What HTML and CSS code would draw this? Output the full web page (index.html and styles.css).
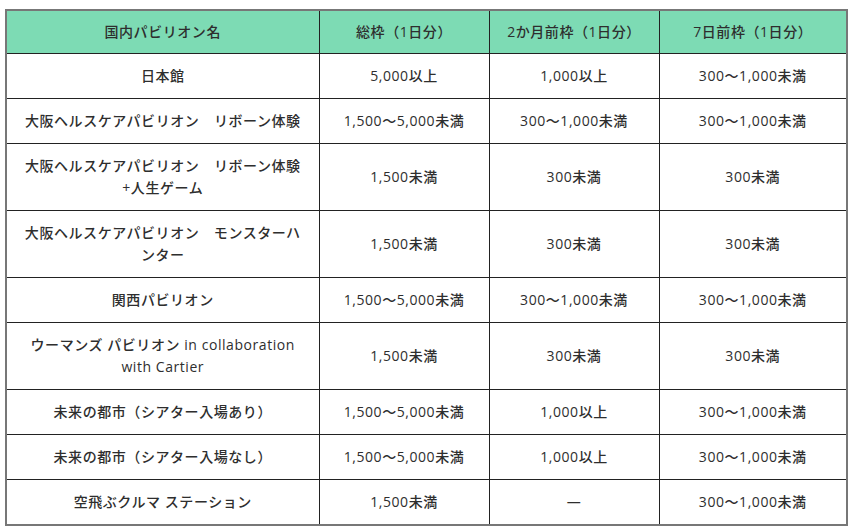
FILE: index.html
```html
<!DOCTYPE html>
<html lang="ja">
<head>
<meta charset="utf-8">
<link rel="stylesheet" href="styles.css">
</head>
<body>
<table class="tbl">
  <thead>
    <tr>
      <th class="c1">国内パビリオン名</th>
      <th class="c2">総枠（1日分）</th>
      <th class="c3">2か月前枠（1日分）</th>
      <th class="c4">7日前枠（1日分）</th>
    </tr>
  </thead>
  <tbody>
    <tr><td>日本館</td><td>5,000以上</td><td>1,000以上</td><td>300～1,000未満</td></tr>
    <tr><td>大阪ヘルスケアパビリオン　リボーン体験</td><td>1,500～5,000未満</td><td>300～1,000未満</td><td>300～1,000未満</td></tr>
    <tr><td>大阪ヘルスケアパビリオン　リボーン体験<br>+人生ゲーム</td><td>1,500未満</td><td>300未満</td><td>300未満</td></tr>
    <tr><td>大阪ヘルスケアパビリオン　モンスターハンター</td><td>1,500未満</td><td>300未満</td><td>300未満</td></tr>
    <tr><td>関西パビリオン</td><td>1,500～5,000未満</td><td>300～1,000未満</td><td>300～1,000未満</td></tr>
    <tr><td>ウーマンズ パビリオン in collaboration with Cartier</td><td>1,500未満</td><td>300未満</td><td>300未満</td></tr>
    <tr><td>未来の都市（シアター入場あり）</td><td>1,500～5,000未満</td><td>1,000以上</td><td>300～1,000未満</td></tr>
    <tr><td>未来の都市（シアター入場なし）</td><td>1,500～5,000未満</td><td>1,000以上</td><td>300～1,000未満</td></tr>
    <tr><td>空飛ぶクルマ ステーション</td><td>1,500未満</td><td>―</td><td>300～1,000未満</td></tr>
  </tbody>
</table>
</body>
</html>
```
FILE: styles.css
```css
html, body {
  margin: 0;
  padding: 0;
  background: #ffffff;
}
body {
  padding: 9px 0 0 5px;
  font-family: "Open Sans", "Noto Sans CJK JP", sans-serif;
  color: #2e2e2e;
  font-size: 14px;
}
.tbl {
  border-collapse: collapse;
  table-layout: fixed;
  width: 841px;
  border: 2px solid #777777;
}
.tbl th,
.tbl td {
  box-sizing: border-box;
  border: 1px solid #222222;
  padding: 11px 16px;
  line-height: 22px;
  text-align: center;
  vertical-align: middle;
  font-weight: 500;
  letter-spacing: 0.04em;
}
.tbl th {
  background: #7ddbb4;
  padding: 10px 16px;
}
.c1 { width: 313px; }
.c2 { width: 170px; }
.c3 { width: 170px; }
.c4 { width: 188px; }
```
